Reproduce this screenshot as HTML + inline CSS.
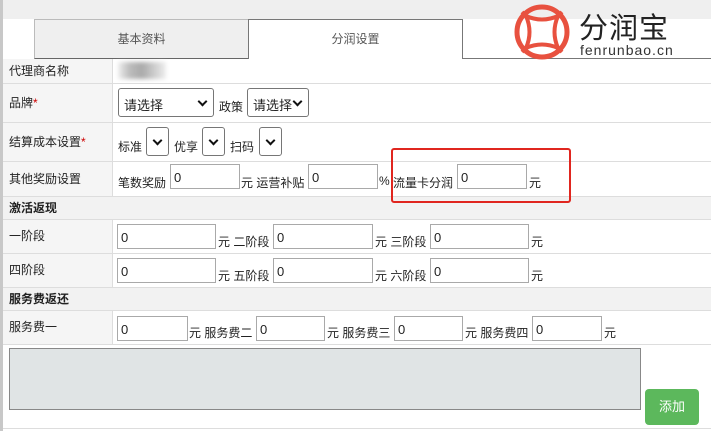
<!DOCTYPE html>
<html><head><meta charset="utf-8"><style>
*{box-sizing:border-box;margin:0;padding:0}
body{width:711px;height:431px;overflow:hidden;background:#fff;font-family:"Liberation Sans","Noto Sans CJK SC",sans-serif;font-size:12px;color:#222;position:relative}
.a{position:absolute}
.hl{position:absolute;left:3px;right:0;height:1px;background:#ddd}
.lab{position:absolute;left:3px;width:110px;background:#f5f5f5;border-right:1px solid #ddd;padding-left:6px}
.sec{position:absolute;left:3px;right:0;background:#f2f2f2;font-weight:bold;padding-left:6px}
.in{position:absolute;height:25px;border:1px solid #a9a9a9;background:#fff;padding:5px 0 0 3px;font-size:13px}
.sel{position:absolute;height:29px;border:1px solid #767676;border-radius:3px;background:#fff;font-size:13px;padding:6px 0 0 5px}
.sel:after{content:"";position:absolute;right:7px;top:9px;width:5px;height:5px;border-right:2px solid #111;border-bottom:2px solid #111;transform:rotate(45deg)}
.t{position:absolute;font-size:12px;margin-top:2px}
</style></head><body>
<div class="a" style="left:0;top:0;width:3px;height:431px;background:#c8c8c8"></div>
<div class="a" style="left:3px;top:0;right:0;height:19px;background:#efefef"></div>
<div class="a" style="left:34px;top:19px;width:215px;height:40px;background:#efefef;border:1px solid #bbb;border-bottom-color:#666;text-align:center;line-height:38px;color:#555">基本资料</div>
<div class="a" style="left:248px;top:19px;width:215px;height:40px;background:#fff;border:1px solid #777;border-bottom:none;text-align:center;line-height:38px;color:#555">分润设置</div>
<div class="a" style="left:462px;top:58px;right:0;height:1px;background:#777"></div>

<div class="lab" style="top:59px;height:24px;line-height:24px">代理商名称</div>
<div class="a" style="left:118px;top:62px;width:48px;height:17px;background:linear-gradient(90deg,#eee,#bbb,#aaa,#ccc,#eee);filter:blur(2px)"></div>
<div class="hl" style="top:83px"></div>
<div class="lab" style="top:84px;height:38px;line-height:38px">品牌<span style="color:#c00">*</span></div>
<div class="sel" style="left:118px;top:88px;width:96px">请选择</div>
<div class="t" style="left:219px;top:96px">政策</div>
<div class="sel" style="left:247px;top:88px;width:62px">请选择</div>
<div class="hl" style="top:122px"></div>
<div class="lab" style="top:123px;height:38px;line-height:38px">结算成本设置<span style="color:#c00">*</span></div>
<div class="t" style="left:118px;top:136px">标准</div><div class="sel" style="left:146px;top:127px;width:23px"></div>
<div class="t" style="left:174px;top:136px">优享</div><div class="sel" style="left:202px;top:127px;width:23px"></div>
<div class="t" style="left:230px;top:136px">扫码</div><div class="sel" style="left:259px;top:127px;width:23px"></div>
<div class="hl" style="top:161px"></div>
<div class="lab" style="top:162px;height:34px;line-height:34px">其他奖励设置</div>
<div class="t" style="left:118px;top:172px">笔数奖励</div><div class="in" style="left:170px;top:164px;width:70px">0</div>
<div class="t" style="left:241px;top:172px">元 运营补贴</div><div class="in" style="left:308px;top:164px;width:70px">0</div>
<div class="t" style="left:379px;top:172px">%</div>
<div class="t" style="left:393px;top:172px">流量卡分润</div><div class="in" style="left:457px;top:164px;width:70px">0</div>
<div class="t" style="left:529px;top:172px">元</div>
<div class="hl" style="top:196px"></div>
<div class="sec" style="top:197px;height:22px;line-height:22px">激活返现</div>
<div class="hl" style="top:219px"></div>
<div class="lab" style="top:220px;height:33px;line-height:33px">一阶段</div>
<div class="in" style="left:117px;top:224px;width:99px">0</div><div class="t" style="left:218px;top:231px">元 二阶段</div>
<div class="in" style="left:273px;top:224px;width:100px">0</div><div class="t" style="left:375px;top:231px">元 三阶段</div>
<div class="in" style="left:430px;top:224px;width:99px">0</div><div class="t" style="left:531px;top:231px">元</div>
<div class="hl" style="top:253px"></div>
<div class="lab" style="top:254px;height:33px;line-height:33px">四阶段</div>
<div class="in" style="left:117px;top:258px;width:99px">0</div><div class="t" style="left:218px;top:265px">元 五阶段</div>
<div class="in" style="left:273px;top:258px;width:100px">0</div><div class="t" style="left:375px;top:265px">元 六阶段</div>
<div class="in" style="left:430px;top:258px;width:99px">0</div><div class="t" style="left:531px;top:265px">元</div>
<div class="hl" style="top:287px"></div>
<div class="sec" style="top:288px;height:22px;line-height:22px">服务费返还</div>
<div class="hl" style="top:310px"></div>
<div class="lab" style="top:311px;height:33px;line-height:33px">服务费一</div>
<div class="in" style="left:117px;top:316px;width:71px">0</div><div class="t" style="left:189px;top:322px">元 服务费二</div>
<div class="in" style="left:256px;top:316px;width:69px">0</div><div class="t" style="left:327px;top:322px">元 服务费三</div>
<div class="in" style="left:394px;top:316px;width:69px">0</div><div class="t" style="left:465px;top:322px">元 服务费四</div>
<div class="in" style="left:532px;top:316px;width:70px">0</div><div class="t" style="left:604px;top:322px">元</div>
<div class="hl" style="top:344px"></div>
<div class="a" style="left:9px;top:348px;width:632px;height:62px;background:#e0e4e5;border:1px solid #888"></div>
<div class="a" style="left:645px;top:389px;width:54px;height:36px;background:#5cb85c;border-radius:4px;color:#fff;font-size:13px;text-align:center;line-height:36px">添加</div>
<div class="hl" style="top:428px"></div>

<div class="a" style="left:391px;top:148px;width:180px;height:55px;border:2px solid #e0261f;border-radius:3px"></div>
<svg class="a" style="left:512px;top:2px" width="60" height="60" viewBox="0 0 60 60">
<circle cx="30" cy="30" r="25" fill="none" stroke="#e8513f" stroke-width="5"/>
<path d="M14 14 Q30 21 46 14 Q39 30 46 46 Q30 39 14 46 Q21 30 14 14Z M14 14 L10 10 M46 14 L50 10 M46 46 L50 50 M14 46 L10 50" fill="none" stroke="#e8513f" stroke-width="4"/>
</svg>
<div class="a" style="left:579px;top:5px;font-size:29px;color:#222;letter-spacing:1px">分润宝</div>
<div class="a" style="left:580px;top:42px;font-size:14px;color:#333;letter-spacing:1px">fenrunbao.cn</div>
</body></html>
